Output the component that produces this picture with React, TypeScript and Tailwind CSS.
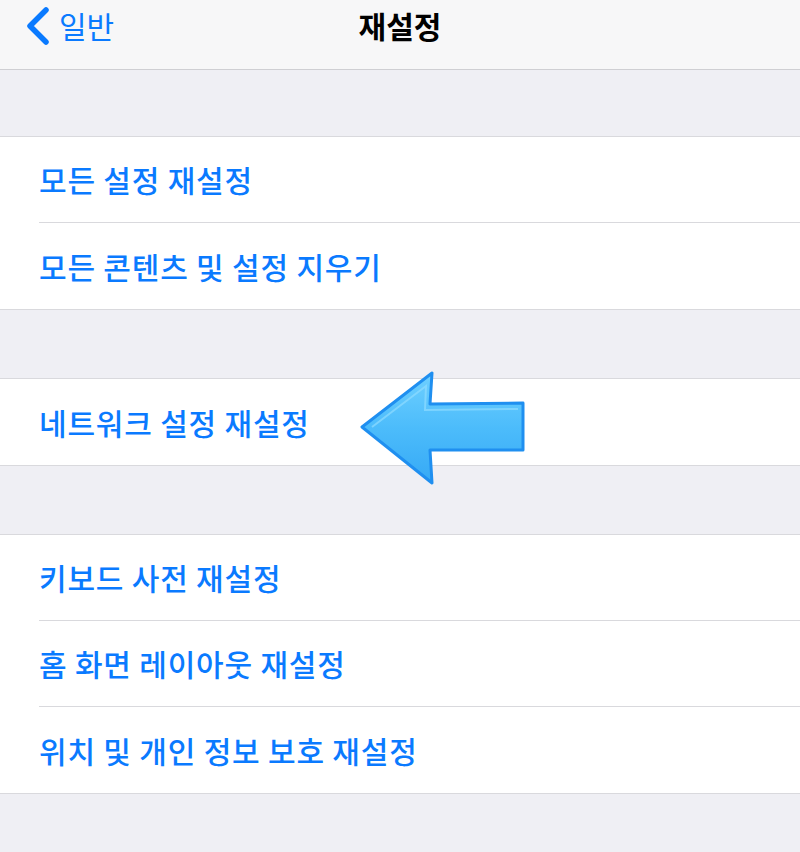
import React from 'react'

const font = { fontFamily: '"Noto Sans CJK KR", "Noto Sans", sans-serif' }

const groups: string[][] = [
  ['모든 설정 재설정', '모든 콘텐츠 및 설정 지우기'],
  ['네트워크 설정 재설정'],
  ['키보드 사전 재설정', '홈 화면 레이아웃 재설정', '위치 및 개인 정보 보호 재설정'],
]

const Arrow: React.FC = () => (
  <svg width="170" height="116" viewBox="0 0 170 116" className="absolute left-[358px] top-[370px]">
    <defs>
      <linearGradient id="arrowFill" x1="0" y1="0" x2="0" y2="1">
        <stop offset="0" stopColor="#6fd0ff" />
        <stop offset="0.5" stopColor="#4cbcfb" />
        <stop offset="1" stopColor="#36a9f5" />
      </linearGradient>
    </defs>
    <path
      d="M4 57 L74 3 L72 34 L165 33 L165 80 L72 80 L74 113 Z"
      fill="url(#arrowFill)"
      stroke="#1f8ff0"
      strokeWidth="3"
      strokeLinejoin="round"
    />
    <path d="M14 57 L68 16 L67 40 L160 39" fill="none" stroke="#8fdcff" strokeWidth="2" opacity="0.7" />
  </svg>
)

const SettingsRow: React.FC<{ label: string; last: boolean }> = ({ label, last }) => (
  <div className="pl-[39px]">
    <div className={`h-[86px] flex items-center ${last ? '' : 'border-b border-[#d9d9dd]'}`}>
      <span className="text-[30px] font-medium text-[#0a7aff] tracking-[0.8px]">{label}</span>
    </div>
  </div>
)

export default function App() {
  return (
    <div className="relative w-[800px] h-[852px] bg-[#efeff4] overflow-hidden" style={font}>
      {/* Nav bar */}
      <div className="relative h-[70px] bg-[#f7f7f8] border-b border-[#cfcfd3] flex items-center">
        <div className="flex items-center pl-[24px] pb-[18px]">
          <svg width="28" height="42" viewBox="0 0 28 42">
            <path d="M22 5 L6 21 L22 37" fill="none" stroke="#0a7aff" strokeWidth="5.5" strokeLinecap="round" strokeLinejoin="round" />
          </svg>
          <span className="ml-[7px] text-[30px] text-[#0a7aff]">일반</span>
        </div>
        <div className="absolute inset-x-0 top-0 text-center pt-[3px]">
          <span className="text-[30px] font-bold text-black">재설정</span>
        </div>
      </div>

      <div className="flex flex-col gap-[68px] pt-[66px]">
        {groups.map((rows, gi) => (
          <div key={gi} className="bg-white border-y border-[#d9d9dd]">
            {rows.map((label, i) => (
              <SettingsRow key={label} label={label} last={i === rows.length - 1} />
            ))}
          </div>
        ))}
      </div>

      <Arrow />
    </div>
  )
}
